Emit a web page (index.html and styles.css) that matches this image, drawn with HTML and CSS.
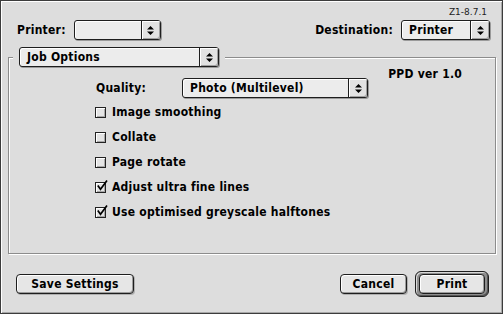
FILE: index.html
```html
<!DOCTYPE html>
<html>
<head>
<meta charset="utf-8">
<link rel="stylesheet" href="styles.css">
</head>
<body>
<div class="window">
  <div class="version">Z1-8.7.1</div>
  <div class="toprow">
    <div class="field">
      <span class="label">Printer:</span>
      <div class="popup popup-printer">
        <span class="popup-text"></span>
        <span class="popup-arrows"><svg width="7" height="9" viewBox="0 0 7 9"><path d="M3.5 0 L7 3.5 L0 3.5 Z M0 5.5 L7 5.5 L3.5 9 Z" fill="#000"/></svg></span>
      </div>
    </div>
    <div class="field">
      <span class="label">Destination:</span>
      <div class="popup popup-dest">
        <span class="popup-text">Printer</span>
        <span class="popup-arrows"><svg width="7" height="9" viewBox="0 0 7 9"><path d="M3.5 0 L7 3.5 L0 3.5 Z M0 5.5 L7 5.5 L3.5 9 Z" fill="#000"/></svg></span>
      </div>
    </div>
  </div>
  <fieldset class="group">
    <legend class="group-legend">
      <div class="popup popup-job">
        <span class="popup-text">Job Options</span>
        <span class="popup-arrows"><svg width="7" height="9" viewBox="0 0 7 9"><path d="M3.5 0 L7 3.5 L0 3.5 Z M0 5.5 L7 5.5 L3.5 9 Z" fill="#000"/></svg></span>
      </div>
    </legend>
    <div class="ppd">PPD ver 1.0</div>
    <div class="quality-row">
      <span class="quality-label">Quality:</span>
      <div class="popup popup-quality">
        <span class="popup-text">Photo (Multilevel)</span>
        <span class="popup-arrows"><svg width="7" height="9" viewBox="0 0 7 9"><path d="M3.5 0 L7 3.5 L0 3.5 Z M0 5.5 L7 5.5 L3.5 9 Z" fill="#000"/></svg></span>
      </div>
    </div>
    <ul class="options">
      <li class="option"><span class="checkbox"></span><span class="option-text">Image smoothing</span></li>
      <li class="option"><span class="checkbox"></span><span class="option-text">Collate</span></li>
      <li class="option"><span class="checkbox"></span><span class="option-text">Page rotate</span></li>
      <li class="option"><span class="checkbox checked"><svg class="check" width="12" height="12" viewBox="0 0 12 12"><path d="M1.8 5.5 L4.5 9.2 L11 0.5" fill="none" stroke="#000" stroke-width="1.7"/></svg></span><span class="option-text">Adjust ultra fine lines</span></li>
      <li class="option"><span class="checkbox checked"><svg class="check" width="12" height="12" viewBox="0 0 12 12"><path d="M1.8 5.5 L4.5 9.2 L11 0.5" fill="none" stroke="#000" stroke-width="1.7"/></svg></span><span class="option-text">Use optimised greyscale halftones</span></li>
    </ul>
  </fieldset>
  <div class="buttons">
    <button class="btn btn-save">Save Settings</button>
    <div class="spacer"></div>
    <button class="btn btn-cancel">Cancel</button>
    <div class="default-ring"><button class="btn btn-print">Print</button></div>
  </div>
</div>
</body>
</html>
```
FILE: styles.css
```css
html, body {
  margin: 0;
  padding: 0;
  background: #dddddd;
}
.window {
  width: 503px;
  height: 314px;
  box-sizing: border-box;
  border: 1px solid #3c3c3c;
  box-shadow: inset 1px 1px 0 #ffffff, inset -1px -1px 0 #a8a8a8;
  background: #dddddd;
  display: flex;
  flex-direction: column;
  font-family: "DejaVu Sans Condensed", "DejaVu Sans", sans-serif;
  font-weight: bold;
  font-size: 12px;
  letter-spacing: 0.25px;
  color: #000;
}
.version {
  height: 19px;
  box-sizing: border-box;
  padding-top: 6px;
  padding-right: 15px;
  text-align: right;
  font-family: "DejaVu Sans", sans-serif;
  font-weight: normal;
  font-size: 9px;
  letter-spacing: 0;
  line-height: 11px;
  color: #222;
}
.toprow {
  height: 20px;
  display: flex;
  justify-content: space-between;
  padding: 0 12px 0 16px;
}
.field {
  display: flex;
  align-items: center;
  gap: 8px;
}
.label {
  line-height: 20px;
}
.popup {
  height: 20px;
  box-sizing: border-box;
  border: 1px solid #1e1e1e;
  border-radius: 3px;
  background: #ececec;
  box-shadow: 1px 1px 0 #9a9a9a, inset 1px 1px 0 #ffffff;
  display: flex;
  align-items: stretch;
}
.popup-text {
  flex: 1;
  padding-left: 7px;
  line-height: 18px;
  white-space: nowrap;
  overflow: hidden;
}
.popup-arrows {
  width: 18px;
  border-left: 1px solid #1e1e1e;
  background: #e2e2e2;
  box-shadow: inset 1px 1px 0 #ffffff, inset -1px -1px 0 #a0a0a0;
  border-radius: 0 2px 2px 0;
  display: flex;
  align-items: center;
  justify-content: center;
}
.popup-printer { width: 87px; }
.popup-dest { width: 89px; }
.popup-job { width: 200px; }
.popup-quality { width: 186px; }

.group {
  flex: 1;
  min-width: 0;
  margin: 7px 6px 0 7px;
  padding: 0;
  border: 1px solid #8c8c8c;
  box-shadow: inset 1px 1px 0 #ffffff, 1px 1px 0 #ffffff;
}
.group-legend {
  margin-left: 4px;
  padding: 0 6px;
  background: #dddddd;
}
.ppd {
  height: 11px;
  line-height: 15px;
  text-align: right;
  padding-right: 33px;
}
.quality-row {
  display: flex;
  align-items: center;
  height: 20px;
  padding-left: 87px;
}
.quality-label {
  width: 86px;
  line-height: 20px;
}
.options {
  list-style: none;
  margin: 2px 0 0 0;
  padding: 0 0 0 86px;
}
.option {
  height: 25px;
  display: flex;
  align-items: center;
}
.checkbox {
  width: 11px;
  height: 11px;
  box-sizing: border-box;
  border: 1px solid #222;
  background: #e4e4e4;
  box-shadow: inset 1px 1px 0 #ffffff, inset -1px -1px 0 #a8a8a8;
  margin-right: 6px;
  display: flex;
  flex: none;
}
.check {
  margin: -3px 0 0 0;
  flex: none;
}
.option-text {
  line-height: 25px;
}
.buttons {
  display: flex;
  align-items: center;
  height: 26px;
  margin-top: 17px;
  padding: 0 13px 16px 15px;
}
.spacer { flex: 1; }
.btn {
  height: 20px;
  box-sizing: border-box;
  border: 1px solid #1e1e1e;
  border-radius: 4px;
  background: #e6e6e6;
  box-shadow: inset 1px 1px 0 #ffffff, inset -1px -1px 0 #9c9c9c, 1px 1px 0 #b0b0b0;
  font: inherit;
  letter-spacing: inherit;
  color: #000;
  padding: 0;
  line-height: 17px;
}
.btn-save { width: 118px; }
.btn-cancel { width: 67px; margin-right: 8px; }
.default-ring {
  width: 74px;
  height: 26px;
  box-sizing: border-box;
  border: 1px solid #1e1e1e;
  border-radius: 6px;
  background: #8e8e8e;
  box-shadow: inset 1px 1px 0 #d8d8d8, inset -1px -1px 0 #555555;
  display: flex;
  align-items: center;
  justify-content: center;
}
.btn-print {
  width: 66px;
  box-shadow: inset 1px 1px 0 #ffffff, inset -1px -1px 0 #9c9c9c;
}
```
